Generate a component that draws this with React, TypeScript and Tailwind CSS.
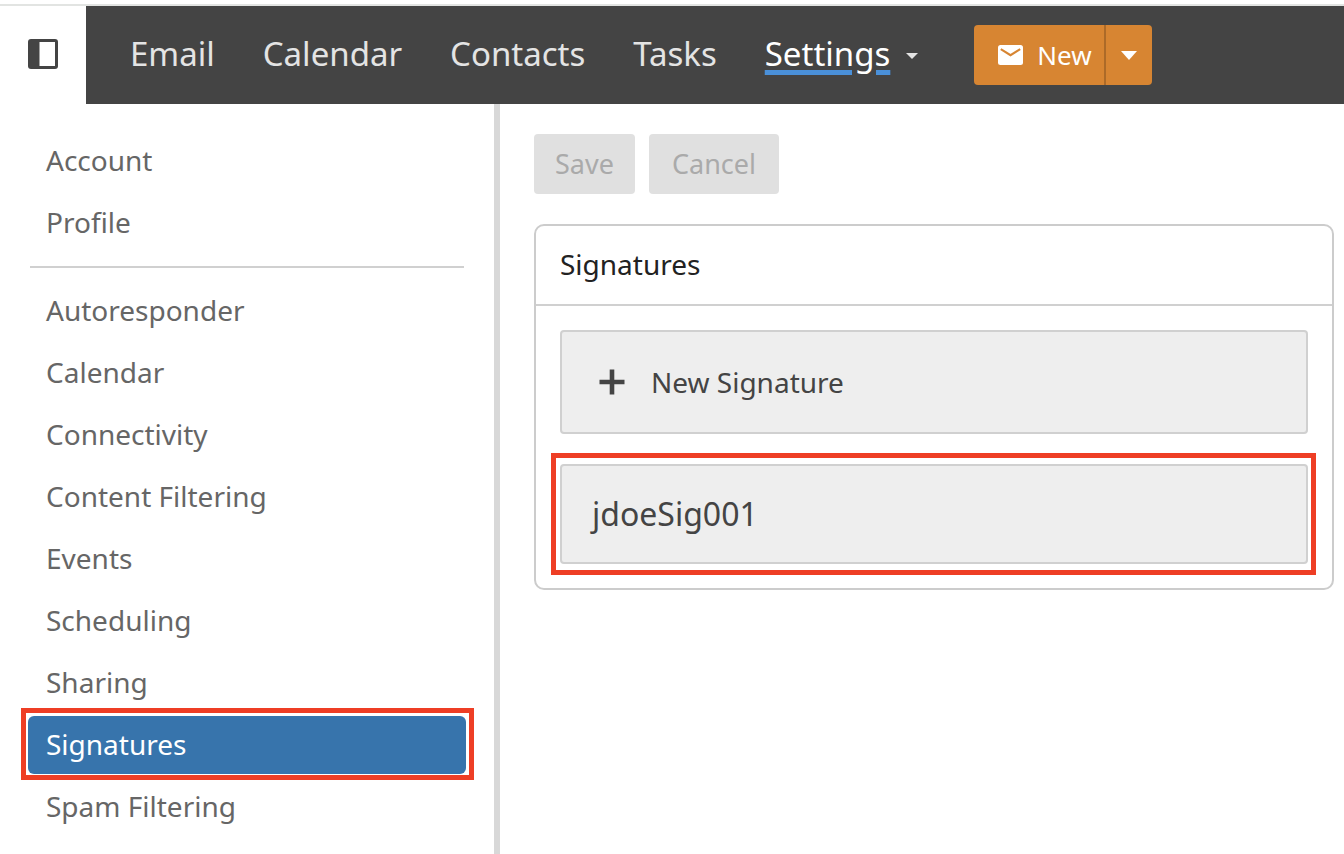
import { useState } from "react";

const NAV_LINKS = ["Email", "Calendar", "Contacts", "Tasks"];

const ACCOUNT_ITEMS = ["Account", "Profile"];

const SETTINGS_ITEMS = [
  "Autoresponder",
  "Calendar",
  "Connectivity",
  "Content Filtering",
  "Events",
  "Scheduling",
  "Sharing",
  "Signatures",
  "Spam Filtering",
];

function PanelIcon() {
  return (
    <svg className="w-[30px] h-[30px]" viewBox="0 0 30 30">
      <rect width="30" height="30" rx="3" fill="#444" />
      <rect x="11.5" y="3" width="15.5" height="24" fill="#fff" />
    </svg>
  );
}

function MailIcon() {
  return (
    <svg className="w-[25px] h-5 shrink-0" viewBox="0 0 25 20">
      <rect width="25" height="20" rx="2.5" fill="#fff" />
      <path d="M2.8 4.2 12.5 10.2 22.2 4.2" fill="none" stroke="#d78532" strokeWidth="2.1" />
    </svg>
  );
}

function PlusIcon() {
  return (
    <svg className="w-[26px] h-[26px] shrink-0" viewBox="0 0 26 26">
      <path d="M13 0.5v25M0.5 13h25" stroke="#444" strokeWidth="4.6" />
    </svg>
  );
}

function Caret({ className }: { className: string }) {
  return (
    <svg className={className} viewBox="0 0 16 9" preserveAspectRatio="none">
      <path d="M0 0h16L8 9z" fill="currentColor" />
    </svg>
  );
}

// Red frame drawn around the item being pointed out
function Highlight({ className }: { className: string }) {
  return (
    <span
      aria-hidden="true"
      className={`absolute border-[5px] border-[#ee3e25] pointer-events-none ${className}`}
    />
  );
}

interface MenuItemProps {
  label: string;
  active: boolean;
  onSelect: (label: string) => void;
}

function MenuItem({ label, active, onSelect }: MenuItemProps) {
  return (
    <li className="relative">
      <a
        href="#"
        onClick={(e) => {
          e.preventDefault();
          onSelect(label);
        }}
        className={`flex items-center h-[58px] px-[18px] pb-0.5 rounded-md ${
          active ? "bg-[#3774ac] text-white" : "text-[#666]"
        }`}
      >
        {label}
      </a>
      {active && <Highlight className="-left-[7px] -right-2 -top-2 -bottom-1.5" />}
    </li>
  );
}

export default function App() {
  const [section, setSection] = useState("Signatures");

  return (
    <div className="min-h-screen flex flex-col pt-1 bg-white font-['Noto_Sans','Open_Sans',sans-serif]">
      {/* Top bar */}
      <header className="flex h-[100px] border-t-2 border-[#e2e4e2] shrink-0">
        <button
          aria-label="Toggle sidebar"
          className="w-[86px] pb-0.5 flex items-center justify-center shrink-0"
        >
          <PanelIcon />
        </button>
        <div className="flex-1 flex items-center bg-[#444] pl-11">
          <nav className="flex items-center gap-12 pb-0.5 text-[33px] leading-[44px] text-[#e4e4e4]">
            {NAV_LINKS.map((label) => (
              <a key={label} href="#">
                {label}
              </a>
            ))}
            <a href="#" className="flex items-center gap-4 text-white">
              <span className="underline decoration-[#4a90d9] decoration-[5px] underline-offset-4">
                Settings
              </span>
              <Caret className="w-3 h-1.5 mt-1 text-[#e4e4e4]" />
            </a>
          </nav>
          <div className="flex h-[60px] ml-14 rounded text-white bg-[#d78532] overflow-hidden">
            <button className="flex items-center gap-3.5 pl-6 w-[130px] text-[26px] leading-9">
              <MailIcon />
              New
            </button>
            <button
              aria-label="More new item types"
              className="w-12 flex items-center justify-center border-l-2 border-[#ac6a28]"
            >
              <Caret className="w-4 h-[9px]" />
            </button>
          </div>
        </div>
      </header>

      <div className="flex-1 flex">
        {/* Settings menu */}
        <aside className="w-[500px] shrink-0 px-7 pt-7 pb-4 border-r-[6px] border-[#d8d8d8] text-[28px] leading-10">
          <ul className="flex flex-col gap-1">
            {ACCOUNT_ITEMS.map((label) => (
              <MenuItem
                key={label}
                label={label}
                active={label === section}
                onSelect={setSection}
              />
            ))}
          </ul>
          <hr className="my-3.5 mx-0.5 border-t-2 border-[#d0d0d0]" />
          <ul className="flex flex-col gap-1">
            {SETTINGS_ITEMS.map((label) => (
              <MenuItem
                key={label}
                label={label}
                active={label === section}
                onSelect={setSection}
              />
            ))}
          </ul>
        </aside>

        <main className="flex-1 min-w-0 pt-[30px] pl-[34px] pr-2.5">
          <div className="flex gap-3.5 text-[27px] leading-9 text-[#aaa]">
            <button disabled className="w-[101px] h-[60px] rounded bg-[#e0e0e0]">
              Save
            </button>
            <button disabled className="w-[130px] h-[60px] rounded bg-[#e0e0e0]">
              Cancel
            </button>
          </div>

          {/* Signature list */}
          <section className="mt-[30px] border-2 border-[#ccc] rounded-[10px]">
            <h2 className="h-20 flex items-center px-6 pb-0.5 border-b-2 border-[#d0d0d0] text-[28px] leading-10 text-[#222]">
              Signatures
            </h2>
            <div className="flex flex-col gap-[30px] p-6 text-[#444]">
              <button className="flex items-center gap-[26px] h-[104px] pl-[37px] border-2 border-[#d0d0d0] rounded bg-[#eee] text-[28px] leading-10">
                <PlusIcon />
                New Signature
              </button>
              <div className="relative">
                <button className="w-full h-[100px] px-[30px] border-2 border-[#d0d0d0] rounded bg-[#eee] text-left text-[32px] leading-10">
                  jdoeSig001
                </button>
                <Highlight className="-left-[9px] -right-2 -top-[11px] -bottom-[11px]" />
              </div>
            </div>
          </section>
        </main>
      </div>
    </div>
  );
}
